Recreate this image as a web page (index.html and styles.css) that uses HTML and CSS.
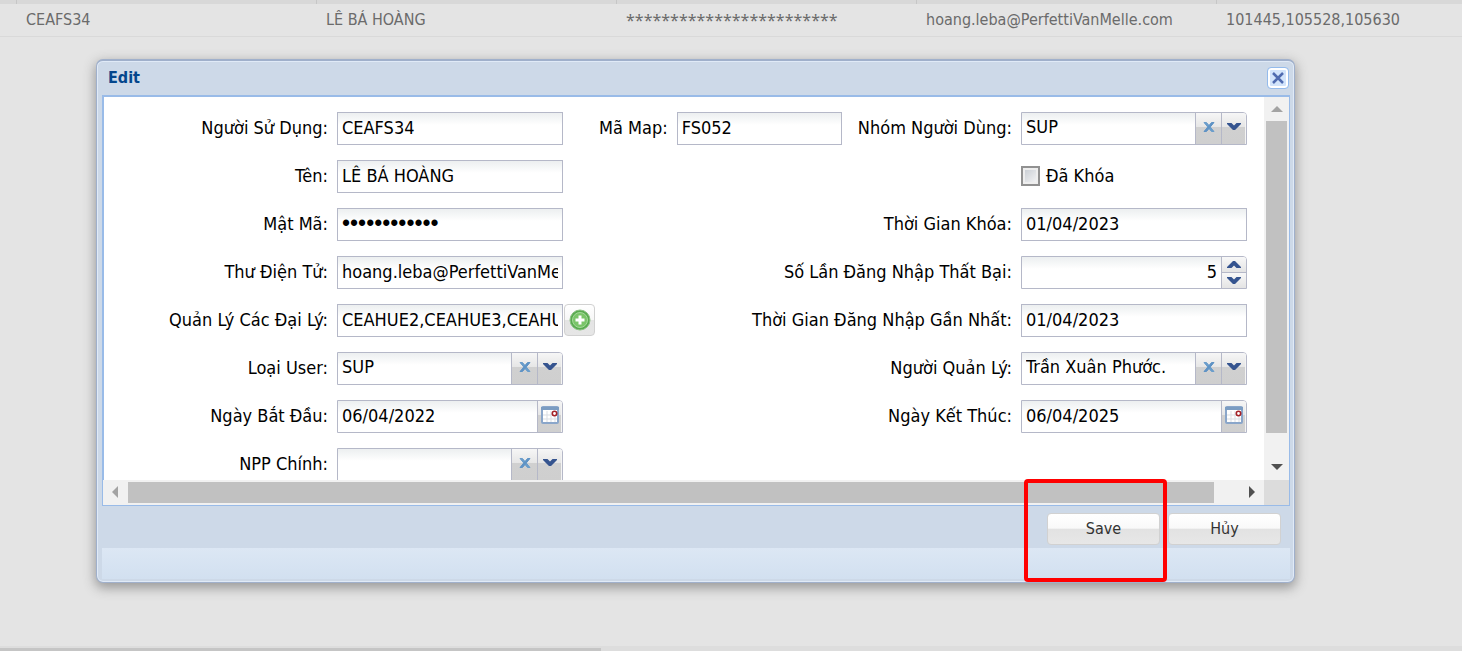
FILE: index.html
```html
<!DOCTYPE html>
<html lang="vi">
<head>
<meta charset="utf-8">
<title>Edit</title>
<link rel="stylesheet" href="styles.css">
</head>
<body>
<svg class="sprite" aria-hidden="true">
  <symbol id="i-clear" viewBox="0 0 12 12"><path d="M1 1.500h2.500L11 10.500H8.500z" fill="#6a9dcb" stroke="#6a9dcb"/><path d="M11 1.500H8.500L1 10.500h2.500z" fill="#5f93c5" stroke="#5f93c5"/></symbol>
  <symbol id="i-down" viewBox="0 0 14 9"><path d="M0 1h4.500L7 3.500 9.500 1H14v1L8 8H6L0 2z" fill="#35548f"/></symbol>
  <symbol id="i-up" viewBox="0 0 14 9"><path d="M0 8h4.500L7 5.500 9.500 8H14V7L8 1H6L0 7z" fill="#35548f"/></symbol>
  <symbol id="i-cal" viewBox="0 0 18 18"><rect x="1" y="1" width="16" height="16" rx="1" fill="#fff" stroke="#8aa6ca" stroke-width="2"/><path d="M0 1h18v3H0z" fill="#7b9cc2"/><path d="M6 5v11M10 5v11M14 5v11M2 9h14M2 13h14" stroke="#d9dde3"/><circle cx="13.500" cy="7.500" r="2.200" fill="#fff" stroke="#a52228" stroke-width="1.600"/></symbol>
</svg>
<main class="page">
  <table class="grid">
    <colgroup><col class="c-edge"><col class="c-data"><col class="c-data"><col class="c-data"><col class="c-data"><col></colgroup>
    <thead><tr><th></th><th></th><th></th><th></th><th></th><th></th></tr></thead>
    <tbody><tr><td></td><td>CEAFS34</td><td>LÊ BÁ HOÀNG</td><td class="masked">************************</td><td>hoang.leba@PerfettiVanMelle.com</td><td>101445,105528,105630</td></tr></tbody>
  </table>

  <section class="window" role="dialog" aria-labelledby="title">
    <header class="head">
      <h1 id="title">Edit</h1>
      <button class="close" type="button" aria-label="Close"><svg viewBox="0 0 14 14" width="14" height="14"><path d="M2 2l10 10M12 2L2 12" stroke="#4f6bb0" stroke-width="2.500"/></svg></button>
    </header>
    <div class="body">
      <form class="form">
        <div class="row">
          <div class="field left"><label for="user">Người Sử Dụng:</label><div class="control"><input id="user" type="text" value="CEAFS34"></div></div>
          <div class="field map"><label for="map">Mã Map:</label><div class="control short"><input id="map" type="text" value="FS052"></div></div>
          <div class="field right"><label for="group">Nhóm Người Dùng:</label><div class="control"><select id="group"><option>SUP</option></select><button class="trig" type="button" aria-label="Clear"><svg class="x"><use href="#i-clear"/></svg></button><button class="trig last" type="button" aria-label="Open"><svg class="v"><use href="#i-down"/></svg></button></div></div>
        </div>
        <div class="row">
          <div class="field left"><label for="name">Tên:</label><div class="control"><input id="name" type="text" value="LÊ BÁ HOÀNG"></div></div>
          <div class="field right"><div class="control check"><input id="locked" type="checkbox"><label for="locked">Đã Khóa</label></div></div>
        </div>
        <div class="row">
          <div class="field left"><label for="pass">Mật Mã:</label><div class="control"><input id="pass" type="password" value="abcdefghijkl"></div></div>
          <div class="field right"><label for="lockdate">Thời Gian Khóa:</label><div class="control"><input id="lockdate" type="text" value="01/04/2023"></div></div>
        </div>
        <div class="row">
          <div class="field left"><label for="mail">Thư Điện Tử:</label><div class="control"><input id="mail" type="text" value="hoang.leba@PerfettiVanMelle.com"></div></div>
          <div class="field right"><label for="fails">Số Lần Đăng Nhập Thất Bại:</label><div class="control"><input id="fails" type="number" value="5"><div class="spin"><button type="button" aria-label="Up"><svg class="v"><use href="#i-up"/></svg></button><button type="button" aria-label="Down"><svg class="v"><use href="#i-down"/></svg></button></div></div></div>
        </div>
        <div class="row">
          <div class="field left"><label for="agents">Quản Lý Các Đại Lý:</label><div class="control"><input id="agents" type="text" value="CEAHUE2,CEAHUE3,CEAHUE4"></div></div>
          <button class="add" type="button" aria-label="Add"><svg viewBox="0 0 22 22" width="22" height="22"><circle cx="11" cy="11" r="10" fill="#58ab4e" stroke="#8cc184" stroke-width="1"/><circle cx="11" cy="11" r="7.500" fill="#7ac569" stroke="#a5d99a"/><path d="M11 6.500v9M6.500 11h9" stroke="#fff" stroke-width="3"/></svg></button>
          <div class="field right"><label for="lastlogin">Thời Gian Đăng Nhập Gần Nhất:</label><div class="control"><input id="lastlogin" type="text" value="01/04/2023"></div></div>
        </div>
        <div class="row">
          <div class="field left"><label for="type">Loại User:</label><div class="control"><select id="type"><option>SUP</option></select><button class="trig" type="button" aria-label="Clear"><svg class="x"><use href="#i-clear"/></svg></button><button class="trig last" type="button" aria-label="Open"><svg class="v"><use href="#i-down"/></svg></button></div></div>
          <div class="field right"><label for="manager">Người Quản Lý:</label><div class="control"><select id="manager"><option>Trần Xuân Phước.</option></select><button class="trig" type="button" aria-label="Clear"><svg class="x"><use href="#i-clear"/></svg></button><button class="trig last" type="button" aria-label="Open"><svg class="v"><use href="#i-down"/></svg></button></div></div>
        </div>
        <div class="row">
          <div class="field left"><label for="start">Ngày Bắt Đầu:</label><div class="control"><input id="start" type="text" value="06/04/2022"><button class="trig last" type="button" aria-label="Calendar"><svg class="cal"><use href="#i-cal"/></svg></button></div></div>
          <div class="field right"><label for="end">Ngày Kết Thúc:</label><div class="control"><input id="end" type="text" value="06/04/2025"><button class="trig last" type="button" aria-label="Calendar"><svg class="cal"><use href="#i-cal"/></svg></button></div></div>
        </div>
        <div class="row">
          <div class="field left"><label for="npp">NPP Chính:</label><div class="control"><select id="npp"><option></option></select><button class="trig" type="button" aria-label="Clear"><svg class="x"><use href="#i-clear"/></svg></button><button class="trig last" type="button" aria-label="Open"><svg class="v"><use href="#i-down"/></svg></button></div></div>
        </div>
      </form>
      <div class="vbar">
        <svg width="12" height="6" viewBox="0 0 12 6"><path d="M0 6l6-6 6 6z" fill="#a3a3a3"/></svg>
        <div class="thumb"></div>
        <svg width="12" height="6" viewBox="0 0 12 6"><path d="M0 0l6 6 6-6z" fill="#505050"/></svg>
      </div>
      <div class="hbar">
        <svg width="6" height="12" viewBox="0 0 6 12"><path d="M6 0L0 6l6 6z" fill="#a3a3a3"/></svg>
        <div class="thumb"></div>
        <svg width="6" height="12" viewBox="0 0 6 12"><path d="M0 0l6 6-6 6z" fill="#505050"/></svg>
      </div>
      <div class="corner"></div>
    </div>
    <footer class="actions">
      <button type="button">Save</button>
      <button type="button">Hủy</button>
    </footer>
    <div class="status"></div>
    <div class="highlight"></div>
  </section>

  <div class="pagebar"><div></div></div>
</main>
</body>
</html>
```
FILE: styles.css
```css
* { box-sizing: border-box; }
body {
  margin: 0;
  background: #e4e4e4;
  color: #000;
  font: 18px/20px "DejaVu Sans Condensed", "Noto Sans", sans-serif;
}
input, select, button { font: inherit; color: inherit; margin: 0; }
button { padding: 0; border: 0; display: flex; align-items: center; justify-content: center; }
svg { display: block; flex: none; }
.sprite { position: absolute; width: 0; height: 0; }
.page { min-height: 100vh; display: flex; flex-direction: column; overflow: hidden; }

.grid { width: 100%; table-layout: fixed; border-collapse: collapse; color: #6b6b6b; font-size: 16px; }
.grid .masked { font-family: "Noto Sans", sans-serif; }
.c-edge { width: 16px; }
.c-data { width: 300px; }
.grid th { height: 4px; padding: 0; background: #d8d8d8; border-right: 1px solid #c6c6c6; }
.grid th:last-child { border-right: 0; }
.grid td { height: 32px; padding: 0 10px; white-space: nowrap; border-bottom: 1px solid #d9d9d9; }
.grid td:first-child { padding: 0; }

.window {
  position: relative;
  margin: 22px 167px 0 96px;
  padding: 0 4px 3px 5px;
  background: #cdd9e8;
  border: 1px solid #a0b0cb;
  border-top-width: 2px;
  border-radius: 7px;
  box-shadow: inset 0 0 0 1px #e0eaf7, 0 4px 12px 1px #999;
}
.head { display: flex; align-items: center; justify-content: space-between; height: 34px; padding-left: 6px; }
.head h1 { margin: 0; font-size: 16px; line-height: 20px; color: #04468c; }
.close {
  width: 22px; height: 22px; margin-right: 1px;
  border: 1px solid #94bbec; border-radius: 4px;
  background: #d2e4fb; box-shadow: inset 0 0 0 2px #fff;
}
.body {
  display: grid;
  grid-template: auto 25px / minmax(0, 1fr) 25px;
  background: #fff;
  border: 1px solid #99bbe8;
  border-top-width: 2px;
}
.form {
  height: 383px; overflow: hidden;
  padding: 15px 17px 0 1px;
  border-left: 1px solid #99bbe8;
  display: flex; flex-direction: column; gap: 15px;
}
.row { display: flex; flex: none; height: 33px; align-items: center; }
.field { display: flex; align-items: center; gap: 9px; white-space: nowrap; }
.left > label { width: 223px; text-align: right; }
.map { margin-left: 36px; }
.right { margin-left: auto; }
.control { display: flex; width: 226px; height: 33px; border: 1px solid #b5b8c8; overflow: hidden; }
.control:has(.last, .spin) { border-top-right-radius: 4px; }
.short { width: 165px; }
.control > input, .control > select {
  flex: 1; min-width: 0; width: 100%; height: 31px;
  padding: 0 4px 2px; border: 0; border-radius: 0; outline: 0; appearance: none;
  background: linear-gradient(#eceff0, #fff 12px);
}
.control > input[type="password"] { font-family: "Liberation Sans", sans-serif; font-size: 23px; }
.control > input[type="number"] { text-align: right; appearance: textfield; }
input[type="number"]::-webkit-inner-spin-button { appearance: none; }
.check { border: 0; align-items: center; gap: 6px; }
.control > input[type="checkbox"] {
  flex: none; width: 19px; height: 20px; padding: 0;
  border: 2px solid #919191; box-shadow: inset 0 0 0 2px #eee;
  background: linear-gradient(135deg, #c4c9d0, #f8f8f8);
}
.trig {
  flex: none; width: 26px; height: 31px; padding-bottom: 3px;
  border-left: 1px solid #b5b8c8;
  background: linear-gradient(#f6f6f6, #e6e6e6 45%, #d0d0d0 46%, #cfcfcf);
}
.last, .spin { width: 25px; box-shadow: inset -1px 0 #f4f4f4; }
.x { width: 12px; height: 12px; }
.v { width: 14px; height: 9px; }
.cal { width: 18px; height: 18px; }
.spin { display: grid; grid-template-rows: 15px 16px; border-left: 1px solid #b5b8c8; }
.spin button { background: linear-gradient(#f8f8f8, #e4e4e4); }
.spin button + button { border-top: 1px solid #b5b8c8; }
.add {
  width: 31px; height: 32px; margin-left: 1px;
  border: 1px solid #d1d1d1; border-radius: 4px;
  background: linear-gradient(#fff, #f7f7f7 50%, #e4e4e4 51%, #e6e6e6);
}

.vbar, .hbar { display: flex; align-items: center; background: #f1f1f1; }
.vbar { flex-direction: column; padding: 9px 0 10px; }
.vbar .thumb { width: 21px; flex: none; height: 312px; margin: 9px 0 auto; background: #c1c1c1; }
.hbar { padding: 0 9px; }
.hbar .thumb { height: 21px; flex: 1; margin: 0 35px 0 10px; background: #c1c1c1; }
.corner { background: #dcdcdc; }

.actions { display: flex; justify-content: flex-end; gap: 8px; padding: 7px 9px 3px; }
.actions button {
  width: 113px; height: 32px;
  border: 1px solid #d1d1d1; border-radius: 4px;
  color: #333; font-size: 16px;
  background: linear-gradient(#fff, #f9f9f9 48%, #e2e2e2 49%, #e7e7e7);
}
.status { height: 31px; background: linear-gradient(#dce7f4, #d2e0f0); }
.highlight {
  position: absolute; right: 127px; bottom: 0;
  width: 143px; height: 103px;
  border: 4px solid #f00; border-radius: 4px; pointer-events: none;
}

.pagebar { margin-top: auto; padding-top: 2px; background: #ddd; }
.pagebar div { width: 601px; height: 3px; background: #c5c5c5; }
```
